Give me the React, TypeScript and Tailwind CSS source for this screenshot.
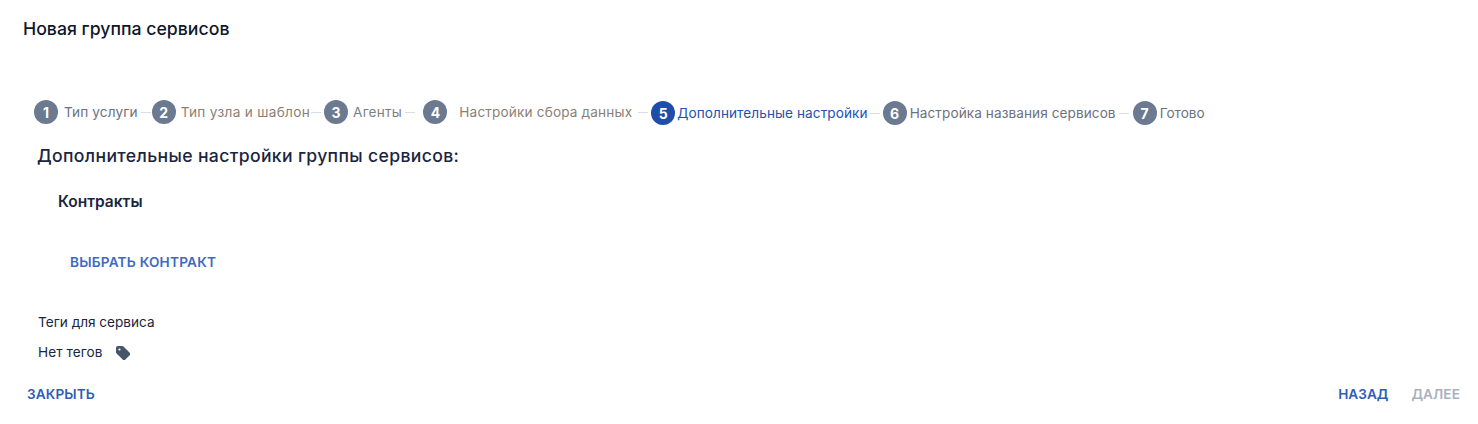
const steps = [
  { n: 1, label: 'Тип услуги', text: 'text-[#6b7280] ml-[6px] tracking-[0.12px]', line: 'ml-[3px] mr-[1px]' },
  { n: 2, label: 'Тип узла и шаблон', text: 'text-[#8a7f76] ml-[5px] tracking-[0.32px]', line: 'ml-[1px] mr-[3px]' },
  { n: 3, label: 'Агенты', text: 'text-[#7b7f86] ml-[5px] tracking-[0.2px]', line: 'ml-[3px] mr-[8.5px]' },
  { n: 4, label: 'Настройки сбора данных', text: 'text-[#8a7f76] ml-[12px] tracking-[0.16px]', line: 'ml-[6px] mr-[3px]' },
  { n: 5, label: 'Дополнительные настройки', text: 'text-[#2252b0] ml-[2px] tracking-[0.08px]', line: 'ml-[2px] mr-[3px]', active: true },
  { n: 6, label: 'Настройка названия сервисов', text: 'text-[#6b7280] ml-[3px] tracking-[0.08px]', line: 'ml-[3px] mr-[4px]' },
  { n: 7, label: 'Готово', text: 'text-[#6b7280] ml-[3px]', line: '' },
];

function TagIcon() {
  return (
    <svg width="16" height="16" viewBox="0 0 16 16" aria-hidden="true">
      <path
        fill="#475569"
        fillRule="evenodd"
        d="M1 3C1 1.9 1.9 1 3 1h4c.6 0 1.1.2 1.5.6l6 6c.8.8.8 2 0 2.8l-4.1 4.1c-.8.8-2 .8-2.8 0l-6-6C1.2 8.1 1 7.6 1 7V3zm3.5 2.6a1.1 1.1 0 1 0 0-2.2 1.1 1.1 0 0 0 0 2.2z"
      />
    </svg>
  );
}

export default function App() {
  return (
    <div className="w-[1478px] h-[424px] bg-white font-['Inter',sans-serif] overflow-hidden flex flex-col">
      <h1 className="ml-[23px] mt-[18px] text-[17.7px] leading-[22px] font-medium text-[#0f172a]">Новая группа сервисов</h1>

      <div className="flex items-start ml-[34px] mt-[60px] h-[24px]">
        {steps.map((s) => (
          <div key={s.n} className={`flex items-center ${s.n > 4 ? 'mt-[1px]' : ''}`}>
            <span
              className={`w-[24px] h-[24px] rounded-full flex items-center justify-center text-[14px] font-bold text-white ${
                s.active ? 'bg-[#1e4eaa]' : 'bg-[#6b7a90]'
              }`}
            >
              {s.n}
            </span>
            <span className={`text-[13.6px] leading-[20px] whitespace-nowrap ${s.text}`}>{s.label}</span>
            {s.n < 7 && <span className={`w-[10px] h-px bg-[#d9dde3] ${s.line}`} />}
          </div>
        ))}
      </div>

      <h2 className="ml-[37px] mt-[20px] text-[17.6px] leading-[24px] font-medium tracking-[0.35px] text-[#1a2540]">
        Дополнительные настройки группы сервисов:
      </h2>
      <h3 className="ml-[58px] mt-[23px] text-[15.5px] leading-[22px] font-semibold text-[#1a2540]">Контракты</h3>
      <button className="self-start ml-[70px] mt-[39px] text-[13.6px] leading-[20px] tracking-[0.23px] font-semibold text-[#4169c4]">
        ВЫБРАТЬ КОНТРАКТ
      </button>
      <p className="ml-[38px] mt-[40px] text-[13.6px] leading-[20px] text-[#1a2540]">Теги для сервиса</p>
      <div className="flex items-center ml-[38px] mt-[10px] h-[20px]">
        <span className="text-[13.6px] leading-[20px] tracking-[0.1px] text-[#1a2540]">Нет тегов</span>
        <span className="ml-[12px] mt-[2px]">
          <TagIcon />
        </span>
      </div>
      <div className="flex items-center justify-between ml-[27px] mr-[18px] mt-[22px]">
        <button className="text-[13.6px] leading-[20px] tracking-[0.1px] font-semibold text-[#2f5cb8]">ЗАКРЫТЬ</button>
        <div className="flex items-center gap-[23px]">
          <button className="text-[13.6px] leading-[20px] font-semibold text-[#2f5cb8]">НАЗАД</button>
          <button className="text-[13.6px] leading-[20px] tracking-[0.1px] font-semibold text-[#aab1bf]">ДАЛЕЕ</button>
        </div>
      </div>
    </div>
  );
}
